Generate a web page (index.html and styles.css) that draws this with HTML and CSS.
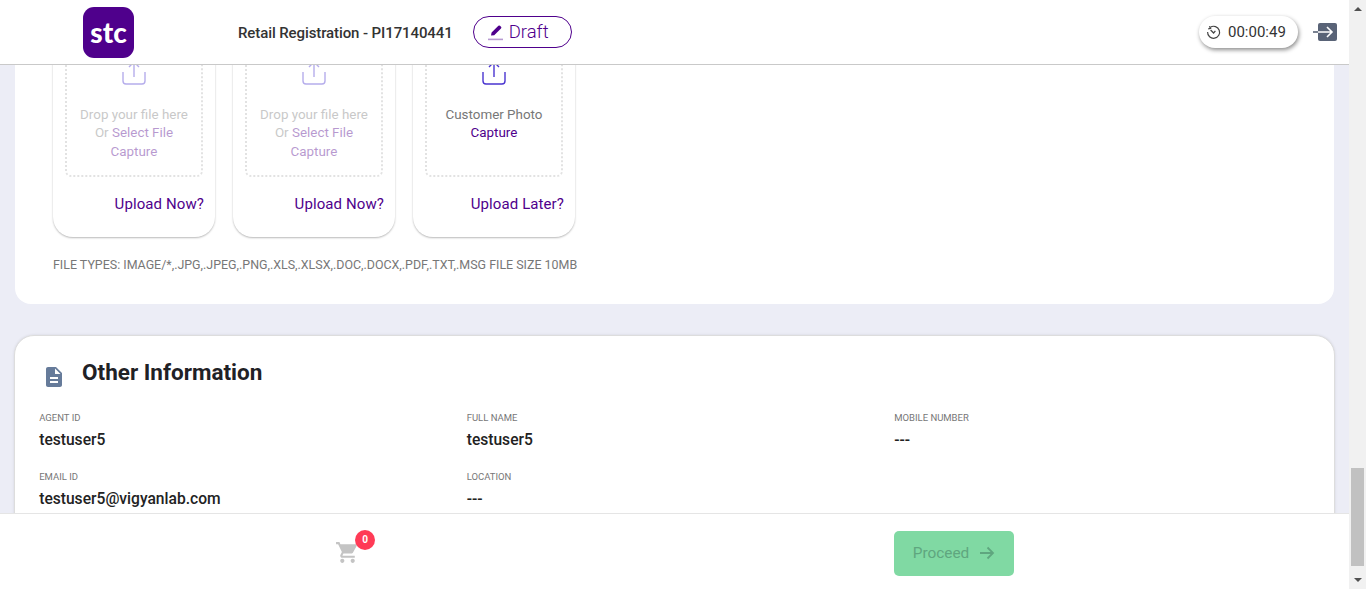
FILE: index.html
```html
<!DOCTYPE html>
<html lang="en">
<head>
  <meta charset="UTF-8" />
  <title>Retail Registration</title>
  <link rel="stylesheet" href="styles.css">
</head>
<body>
  <div class="shell">
    <div class="main">

      <header class="topbar">
        <div class="logo">stc</div>
        <div class="page-title">Retail Registration - PI17140441</div>
        <div class="status-pill">
          <svg width="16" height="18" viewBox="0 0 16 18">
            <path d="M3 12.5L3.6 9.6 10.4 2.8a1.1 1.1 0 0 1 1.6 0l1 1a1.1 1.1 0 0 1 0 1.6L6.2 12.2z" fill="#4f008c"/>
            <rect x="0" y="15.6" width="15" height="1.6" fill="#b79ad1"/>
          </svg>
          <span>Draft</span>
        </div>
        <div class="timer">
          <svg width="15" height="15" viewBox="0 0 15 15" fill="none" stroke="#444" stroke-width="1.2">
            <path d="M4.4 2.2A6 6 0 1 1 1.6 7"/>
            <path d="M3.4 1.2l1.2 2.2-2.4.4" />
            <path d="M4.6 5l3 3 1.8-2.2"/>
          </svg>
          <span>00:00:49</span>
        </div>
        <svg class="logout" width="25" height="20" viewBox="0 0 25 20">
          <rect x="5" y="1" width="19" height="18" rx="2" fill="#596377"/>
          <path d="M0 10h19M14 5l5 5-5 5" fill="none" stroke="#fff" stroke-width="1.6"/>
          <path d="M0 10h5" stroke="#596377" stroke-width="1.6"/>
        </svg>
      </header>

      <div class="content">
        <div class="scrolled">

          <section class="panel">
            <div class="upload-row">
              <div class="upload-card">
                <div class="dropzone is-disabled">
                  <svg class="upload-icon" width="24" height="24" viewBox="0 0 24 24" fill="none" stroke="#4a35d0" stroke-width="1.4"><path d="M12 16V1M7 6l5-5 5 5M1 11v9a3 3 0 0 0 3 3h16a3 3 0 0 0 3-3v-9"/></svg>
                  <p>Drop your file here</p>
                  <p>Or <span class="purple">Select File</span></p>
                  <p class="purple">Capture</p>
                </div>
                <a class="upload-link">Upload Now?</a>
              </div>
              <div class="upload-card">
                <div class="dropzone is-disabled">
                  <svg class="upload-icon" width="24" height="24" viewBox="0 0 24 24" fill="none" stroke="#4a35d0" stroke-width="1.4"><path d="M12 16V1M7 6l5-5 5 5M1 11v9a3 3 0 0 0 3 3h16a3 3 0 0 0 3-3v-9"/></svg>
                  <p>Drop your file here</p>
                  <p>Or <span class="purple">Select File</span></p>
                  <p class="purple">Capture</p>
                </div>
                <a class="upload-link">Upload Now?</a>
              </div>
              <div class="upload-card">
                <div class="dropzone">
                  <svg class="upload-icon" width="24" height="24" viewBox="0 0 24 24" fill="none" stroke="#4a35d0" stroke-width="1.4"><path d="M12 16V1M7 6l5-5 5 5M1 11v9a3 3 0 0 0 3 3h16a3 3 0 0 0 3-3v-9"/></svg>
                  <p>Customer Photo</p>
                  <p class="purple">Capture</p>
                </div>
                <a class="upload-link">Upload Later?</a>
              </div>
            </div>
            <div class="file-types">FILE TYPES: IMAGE/*,.JPG,.JPEG,.PNG,.XLS,.XLSX,.DOC,.DOCX,.PDF,.TXT,.MSG FILE SIZE 10MB</div>
          </section>

          <section class="info-card">
            <div class="info-head">
              <svg width="24" height="24" viewBox="0 0 24 24" fill="#667b9a"><path d="M14 2H6c-1.1 0-1.99.9-1.99 2L4 20c0 1.1.89 2 1.99 2H18c1.1 0 2-.9 2-2V8l-6-6zm2 16H8v-2h8v2zm0-4H8v-2h8v2zm-3-5V3.5L18.5 9H13z"/></svg>
              <h2>Other Information</h2>
            </div>
            <div class="info-grid">
              <div class="field"><label>Agent ID</label><div>testuser5</div></div>
              <div class="field"><label>Full Name</label><div>testuser5</div></div>
              <div class="field"><label>Mobile Number</label><div>---</div></div>
              <div class="field"><label>Email ID</label><div>testuser5@vigyanlab.com</div></div>
              <div class="field"><label>Location</label><div>---</div></div>
            </div>
          </section>

        </div>
      </div>

      <footer class="bottombar">
        <div class="cart">
          <svg width="25" height="25" viewBox="0 0 24 24" fill="#c4c4c4"><path d="M7 18c-1.1 0-1.99.9-1.99 2S5.9 22 7 22s2-.9 2-2-.9-2-2-2zM1 2v2h2l3.6 7.59-1.35 2.45c-.16.28-.25.61-.25.96 0 1.1.9 2 2 2h12v-2H7.42c-.14 0-.25-.11-.25-.25l.03-.12.9-1.63h7.45c.75 0 1.41-.41 1.75-1.03l3.58-6.49c.08-.14.12-.31.12-.48 0-.55-.45-1-1-1H5.21l-.94-2H1zm16 16c-1.1 0-1.99.9-1.99 2s.89 2 1.99 2 2-.9 2-2-.9-2-2-2z"/></svg>
          <span class="badge">0</span>
        </div>
        <button class="proceed">
          Proceed
          <svg width="16" height="16" viewBox="0 0 16 16" fill="none" stroke="#5fa67f" stroke-width="1.8"><path d="M1 8h13M8.5 2.5L14 8l-5.5 5.5"/></svg>
        </button>
      </footer>

    </div>

    <div class="scrollbar">
      <div class="arrow-up"></div>
      <div class="track"><div class="thumb"></div></div>
      <div class="arrow-down"></div>
    </div>
  </div>
</body>
</html>
```

FILE: styles.css
```css
* {
  margin: 0;
  padding: 0;
  box-sizing: border-box;
  font-family: 'Roboto', sans-serif;
}

html, body {
  height: 100%;
  overflow: hidden;
}

.shell {
  display: flex;
  height: 589px;
}

.main {
  width: 1349px;
  display: flex;
  flex-direction: column;
}

/* top bar */
.topbar {
  height: 65px;
  flex-shrink: 0;
  display: flex;
  align-items: center;
  padding: 0 11px 0 83px;
  background: #fff;
  border-bottom: 1px solid #c9c9c9;
  position: relative;
  z-index: 2;
}

.logo {
  width: 51px;
  height: 51px;
  margin-top: 1px;
  border-radius: 11px;
  background: #4f008c;
  color: #fff;
  font-family: 'Lato', sans-serif;
  font-size: 28px;
  font-weight: 900;
  text-align: center;
  line-height: 50px;
}

.page-title {
  margin-left: 104px;
  padding-top: 1px;
  font-size: 15px;
  font-weight: 500;
  letter-spacing: -0.1px;
  color: #333;
}

.status-pill {
  margin-left: 20px;
  width: 99px;
  height: 32px;
  border: 1.5px solid #4f008c;
  border-radius: 16px;
  display: flex;
  align-items: center;
  gap: 5px;
  padding-left: 14px;
  color: #4f008c;
  font-size: 18.5px;
  font-weight: 300;
}

.timer {
  margin-left: auto;
  width: 99px;
  height: 32px;
  border-radius: 16px;
  background: #fff;
  box-shadow: 1px 2px 4px rgba(0, 0, 0, 0.45);
  display: flex;
  align-items: center;
  gap: 7px;
  padding-left: 7px;
  font-size: 15px;
  color: #333;
}

.logout {
  margin-left: 15px;
}

/* scrolled area */
.content {
  flex: 1;
  min-height: 0;
  overflow: hidden;
  background: #ecedf6;
}

.scrolled {
  margin-top: -60px;
}

.panel {
  margin: 0 15px;
  height: 299px;
  padding: 5px 38px 0;
  background: #fff;
  border-radius: 16px;
}

.upload-row {
  display: flex;
  gap: 18px;
}

.upload-card {
  width: 162px;
  height: 227px;
  padding: 14px 12px 0;
  border-radius: 20px;
  background: #fff;
  box-shadow: 0 1px 2px rgba(0, 0, 0, 0.28);
}

.dropzone {
  height: 153px;
  padding-top: 35px;
  border: 2px dotted #e2e2e2;
  border-radius: 6px;
  text-align: center;
  font-size: 13.4px;
  line-height: 18.4px;
  color: #777;
}

.upload-icon {
  display: block;
  margin: 0 auto 21px;
}

.dropzone.is-disabled > * {
  opacity: 0.4;
}

.purple {
  color: #4f008c;
}

.upload-link {
  display: block;
  margin: 17px -1px 0 0;
  text-align: right;
  font-size: 15px;
  letter-spacing: 0.1px;
  line-height: 20px;
  color: #4f008c;
}

.file-types {
  margin-top: 20px;
  font-size: 12.45px;
  color: #777;
  white-space: nowrap;
}

.info-card {
  margin: 31px 14px 0;
  height: 260px;
  padding: 0 24px;
  background: #fff;
  border: 1px solid #ddd;
  border-radius: 20px;
  box-shadow: 0 0 3px rgba(0, 0, 0, 0.1);
}

.info-head {
  display: flex;
  align-items: flex-start;
  gap: 16px;
  padding: 24px 0 0 3px;
  height: 76px;
}

.info-head svg {
  margin-top: 5px;
}

.info-head h2 {
  font-size: 22.5px;
  font-weight: 700;
  line-height: 24px;
  color: #1f2126;
}

.info-grid {
  display: grid;
  grid-template-columns: repeat(3, 427.5px);
  row-gap: 21px;
  margin-left: 0.2px;
}

.field label {
  display: block;
  font-size: 9.5px;
  line-height: 12px;
  text-transform: uppercase;
  color: #777;
}

.field div {
  margin-top: 6px;
  font-size: 15.6px;
  font-weight: 500;
  line-height: 20px;
  color: #222;
}

/* bottom bar */
.bottombar {
  height: 76px;
  flex-shrink: 0;
  display: flex;
  justify-content: space-between;
  align-items: center;
  padding: 0 335px;
  background: #fff;
  border-top: 1px solid #e5e5e5;
  position: relative;
  z-index: 2;
}

.cart {
  position: relative;
  height: 25px;
  margin-top: 2px;
}

.badge {
  position: absolute;
  top: -10px;
  left: 20px;
  width: 20px;
  height: 20px;
  border-radius: 50%;
  background: #ff3b56;
  color: #fff;
  font-size: 10px;
  font-weight: 700;
  line-height: 20px;
  text-align: center;
}

.proceed {
  width: 120px;
  height: 45px;
  margin-top: 4px;
  padding-bottom: 2px;
  border: none;
  border-radius: 5px;
  background: #80d9a3;
  color: #5fa67f;
  font-size: 15.4px;
  display: flex;
  align-items: center;
  justify-content: center;
  gap: 10px;
}

/* scrollbar */
.scrollbar {
  width: 17px;
  height: 589px;
  background: #f1f1f1;
  display: flex;
  flex-direction: column;
  align-items: center;
}

.arrow-up, .arrow-down {
  width: 0;
  height: 0;
  border-left: 4px solid transparent;
  border-right: 4px solid transparent;
  flex-shrink: 0;
}

.arrow-up {
  margin-top: 7px;
  border-bottom: 4px solid #505050;
}

.arrow-down {
  margin-bottom: 7px;
  border-top: 4px solid #505050;
}

.track {
  flex: 1;
  width: 100%;
  padding: 457px 2px 12px;
}

.thumb {
  height: 100%;
  background: #c1c1c1;
}
```
